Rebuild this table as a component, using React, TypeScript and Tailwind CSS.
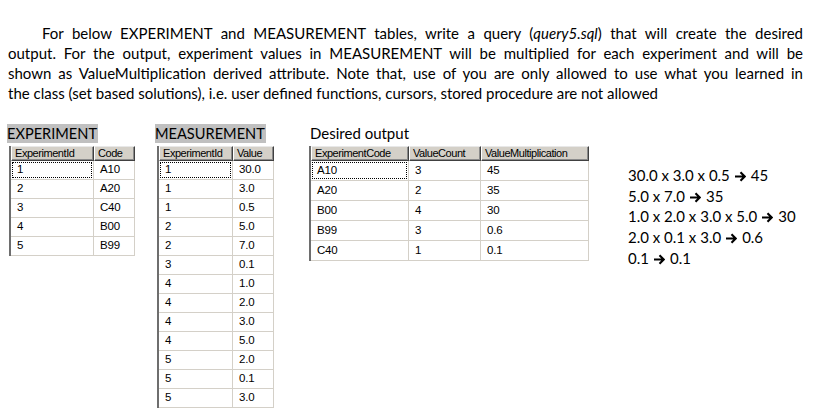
import React from "react";

const Arrow = () => (
  <svg width="11" height="11" viewBox="0 0 11 11" className="inline-block mx-[5px] align-[-1px]">
    <path d="M0 5.5 H9.5 M5.5 1.3 L9.7 5.5 L5.5 9.7" stroke="#000" strokeWidth="2.1" fill="none" strokeLinejoin="miter" />
  </svg>
);

type TableProps = {
  widths: number[];
  headers: string[];
  rows: string[][];
  rowH: number;
};

const Grid = ({ widths, headers, rows, rowH }: TableProps) => (
  <div className="flex flex-col border-l-2 border-l-[#6e6e6e] font-['Liberation_Sans',Arial,sans-serif] text-black">
    <div className="flex">
      {headers.map((h, i) => (
        <div
          key={i}
          style={{ width: widths[i] }}
          className="h-[15px] bg-[#d4d0c8] border-t border-t-[#e8e8e8] border-l border-l-white border-r border-r-[#404040] border-b border-b-[#404040] shadow-[inset_-1px_-1px_0_#8a8a8a] text-[11px] leading-[12px] pl-[3px] tracking-[-0.45px] whitespace-nowrap overflow-hidden"
        >
          {h}
        </div>
      ))}
    </div>
    {rows.map((r, ri) => (
      <div key={ri} className="flex">
        {r.map((c, ci) => (
          <div
            key={ci}
            style={{ width: widths[ci], height: rowH }}
            className="bg-white border-r border-b border-[#d4d0c8] p-[1px]"
          >
            <div
              className={
                "h-full text-[11.5px] flex items-center pl-[4px] tracking-[-0.2px] " +
                (ri === 0 && ci === 0 ? "border border-dotted border-black" : "border border-transparent")
              }
            >
              {c}
            </div>
          </div>
        ))}
      </div>
    ))}
  </div>
);

const lines = [
  "output. For the output, experiment values in MEASUREMENT will be multiplied for each experiment and will be",
  "shown as ValueMultiplication derived attribute. Note that, use of you are only allowed to use what you learned in",
];

export default function App() {
  return (
    <div className="w-[831px] h-[412px] bg-white overflow-hidden text-black font-['Lato','Carlito',sans-serif]">
      <div className="pt-[23px] pl-[8px] w-[803px] text-[15px] leading-[20px]">
        <div className="pl-[34px] whitespace-nowrap text-justify [text-align-last:justify]">
          For below EXPERIMENT and MEASUREMENT tables, write a query (<i>query5.sql</i>) that will create the desired
        </div>
        {lines.map((l, i) => (
          <div key={i} className="whitespace-nowrap text-justify [text-align-last:justify]">
            {l}
          </div>
        ))}
        <div className="whitespace-nowrap">
          the class (set based solutions), i.e. user defined functions, cursors, stored procedure are not allowed
        </div>
      </div>

      <div className="flex items-start mt-[21px]">
        <div className="ml-[7px] flex flex-col items-start">
          <div className="bg-[#c0c0c0] h-[19px] text-[14.6px] leading-[19px] pr-[1px]">EXPERIMENT</div>
          <div className="ml-[2px] mt-[3px]">
            <Grid
              widths={[83, 41]}
              headers={["ExperimentId", "Code"]}
              rowH={19}
              rows={[
                ["1", "A10"],
                ["2", "A20"],
                ["3", "C40"],
                ["4", "B00"],
                ["5", "B99"],
              ]}
            />
          </div>
        </div>

        <div className="ml-[20px] flex flex-col items-start">
          <div className="bg-[#c0c0c0] h-[19px] text-[14.6px] leading-[19px] pr-[1px]">MEASUREMENT</div>
          <div className="ml-[2px] mt-[3px]">
            <Grid
              widths={[74, 41]}
              headers={["ExperimentId", "Value"]}
              rowH={19}
              rows={[
                ["1", "30.0"],
                ["1", "3.0"],
                ["1", "0.5"],
                ["2", "5.0"],
                ["2", "7.0"],
                ["3", "0.1"],
                ["4", "1.0"],
                ["4", "2.0"],
                ["4", "3.0"],
                ["4", "5.0"],
                ["5", "2.0"],
                ["5", "0.1"],
                ["5", "3.0"],
              ]}
            />
          </div>
        </div>

        <div className="ml-[35px] flex flex-col items-start">
          <div className="h-[19px] text-[15px] leading-[19px] pl-[1px]">Desired output</div>
          <div className="mt-[3px]">
            <Grid
              widths={[98, 72, 108]}
              headers={["ExperimentCode", "ValueCount", "ValueMultiplication"]}
              rowH={20}
              rows={[
                ["A10", "3", "45"],
                ["A20", "2", "35"],
                ["B00", "4", "30"],
                ["B99", "3", "0.6"],
                ["C40", "1", "0.1"],
              ]}
            />
          </div>
        </div>

        <div className="ml-[39px] mt-[41px] text-[15px] leading-[20.7px]">
          <div>30.0 x 3.0 x 0.5<Arrow />45</div>
          <div>5.0 x 7.0<Arrow />35</div>
          <div>1.0 x 2.0 x 3.0 x 5.0<Arrow />30</div>
          <div>2.0 x 0.1 x 3.0<Arrow />0.6</div>
          <div>0.1<Arrow />0.1</div>
        </div>
      </div>
    </div>
  );
}
